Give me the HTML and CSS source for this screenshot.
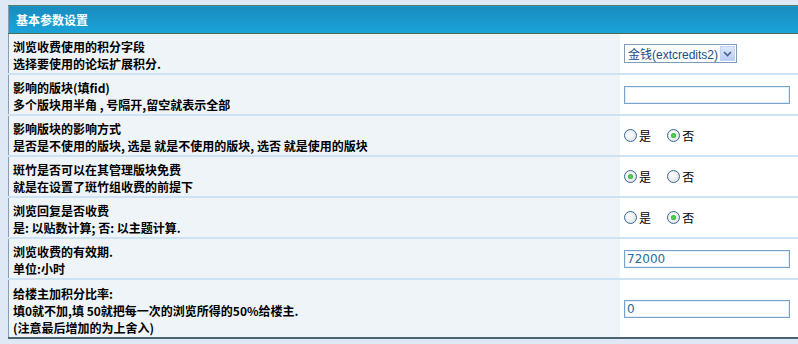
FILE: index.html
```html
<!DOCTYPE html>
<html lang="zh-CN">
<head>
  <meta charset="UTF-8">
  <title>基本参数设置</title>
  <link rel="stylesheet" href="styles.css">
</head>
<body>

  <table class="settings">
    <tr>
      <th colspan="2">基本参数设置</th>
    </tr>
    <tr>
      <td class="label"><div class="desc">浏览收费使用的积分字段<br>选择要使用的论坛扩展积分.</div></td>
      <td class="field">
        <div class="select">
          <span class="select-text">金钱(extcredits2)</span>
          <span class="select-btn">
            <svg width="9" height="6" viewBox="0 0 9 6"><path d="M1 1 L4.5 4.5 L8 1" fill="none" stroke="#4d6185" stroke-width="1.6"/></svg>
          </span>
        </div>
      </td>
    </tr>
    <tr>
      <td class="label"><div class="desc">影响的版块(填fid)<br>多个版块用半角 , 号隔开,留空就表示全部</div></td>
      <td class="field"><input class="text" type="text" value=""></td>
    </tr>
    <tr>
      <td class="label"><div class="desc">影响版块的影响方式<br>是否是不使用的版块, 选是 就是不使用的版块, 选否 就是使用的版块</div></td>
      <td class="field">
        <label class="radio"><input type="radio" name="r1"> 是</label>
        <label class="radio"><input type="radio" name="r1" checked> 否</label>
      </td>
    </tr>
    <tr>
      <td class="label"><div class="desc">斑竹是否可以在其管理版块免费<br>就是在设置了斑竹组收费的前提下</div></td>
      <td class="field">
        <label class="radio"><input type="radio" name="r2" checked> 是</label>
        <label class="radio"><input type="radio" name="r2"> 否</label>
      </td>
    </tr>
    <tr>
      <td class="label"><div class="desc">浏览回复是否收费<br>是: 以贴数计算; 否: 以主题计算.</div></td>
      <td class="field">
        <label class="radio"><input type="radio" name="r3"> 是</label>
        <label class="radio"><input type="radio" name="r3" checked> 否</label>
      </td>
    </tr>
    <tr>
      <td class="label"><div class="desc">浏览收费的有效期.<br>单位:小时</div></td>
      <td class="field"><input class="text" type="text" value="72000"></td>
    </tr>
    <tr class="last">
      <td class="label"><div class="desc">给楼主加积分比率:<br>填0就不加,填 50就把每一次的浏览所得的50%给楼主.<br>(注意最后增加的为上舍入)</div></td>
      <td class="field"><input class="text" type="text" value="0"></td>
    </tr>
  </table>

</body>
</html>
```
FILE: styles.css
```css
body {
  background-color: #dfe9f5;
  margin: 5px 0 0 8px;
  overflow: hidden;
  font-family: "Liberation Sans", "Noto Sans CJK SC", sans-serif;
  font-size: 12px;
}

.settings {
  width: 800px;
  border-collapse: collapse;
  border-left: 1px solid #8a9cb0;
  border-bottom: 2px solid #4a6470;
  background-color: #ffffff;
}

.settings th {
  height: 27px;
  padding: 0 0 0 7px;
  text-align: left;
  color: #ffffff;
  font-weight: bold;
  font-size: 12px;
  font-family: "Noto Sans CJK SC", sans-serif;
  background: linear-gradient(#1a8cbe, #19a4da);
  border-top: 1px solid #5c7a68;
  border-bottom: 1px solid #4f6a4e;
}

.settings td {
  border-bottom: 2px solid #cde2f3;
  vertical-align: middle;
  padding: 0;
}

.settings tr.last td {
  border-bottom: none;
}

.label {
  width: 611px;
  background-color: #eef4f8;
}

.desc {
  height: 39px;
  box-sizing: border-box;
  padding: 4px 4px 0 4px;
  overflow: hidden;
  color: #000000;
  font-family: "Noto Sans CJK SC", sans-serif;
  font-weight: bold;
  font-size: 12px;
  line-height: 17px;
}

.last .desc {
  height: 57px;
  padding-top: 5px;
}

.field {
  padding: 0 4px !important;
}

/* select box */
.select {
  display: flex;
  align-items: center;
  width: 111px;
  height: 17px;
  border: 1px solid #7f9db9;
  background: #ffffff;
}

.select-text {
  flex-grow: 1;
  padding-left: 3px;
  color: #1a4d80;
  font-size: 12px;
  white-space: nowrap;
  font-family: "Liberation Sans", "Noto Sans CJK SC", sans-serif;
}

.select-btn {
  display: flex;
  align-items: center;
  justify-content: center;
  width: 15px;
  height: 15px;
  margin-right: 1px;
  background: linear-gradient(#dde7fb, #b9cdf5);
  border: 1px solid #c2d3f4;
  box-sizing: border-box;
}

/* text inputs */
.text {
  width: 166px;
  height: 18px;
  box-sizing: border-box;
  border: 1px solid #7aa3cc;
  box-shadow: inset 0 0 0 1px #e4eef8;
  padding: 0 2px;
  font-size: 12px;
  font-family: "DejaVu Sans", sans-serif;
  color: #2a6aa0;
  margin: 0;
  display: block;
}

/* radios */
.radio {
  display: inline-flex;
  align-items: center;
  margin-right: 13px;
  font-family: "Noto Sans CJK SC", sans-serif;
  font-size: 12px;
  color: #000000;
}

.radio input {
  appearance: none;
  width: 13px;
  height: 13px;
  margin: 0 2px 0 0;
  border: 1px solid #3a6890;
  border-radius: 50%;
  background: radial-gradient(circle at 40% 40%, #ffffff, #d8dce0);
  position: relative;
}

.radio input:checked::after {
  content: "";
  position: absolute;
  left: 3px;
  top: 3px;
  width: 5px;
  height: 5px;
  border-radius: 50%;
  background: radial-gradient(circle, #5ee05e, #1a9a1a);
}
```
